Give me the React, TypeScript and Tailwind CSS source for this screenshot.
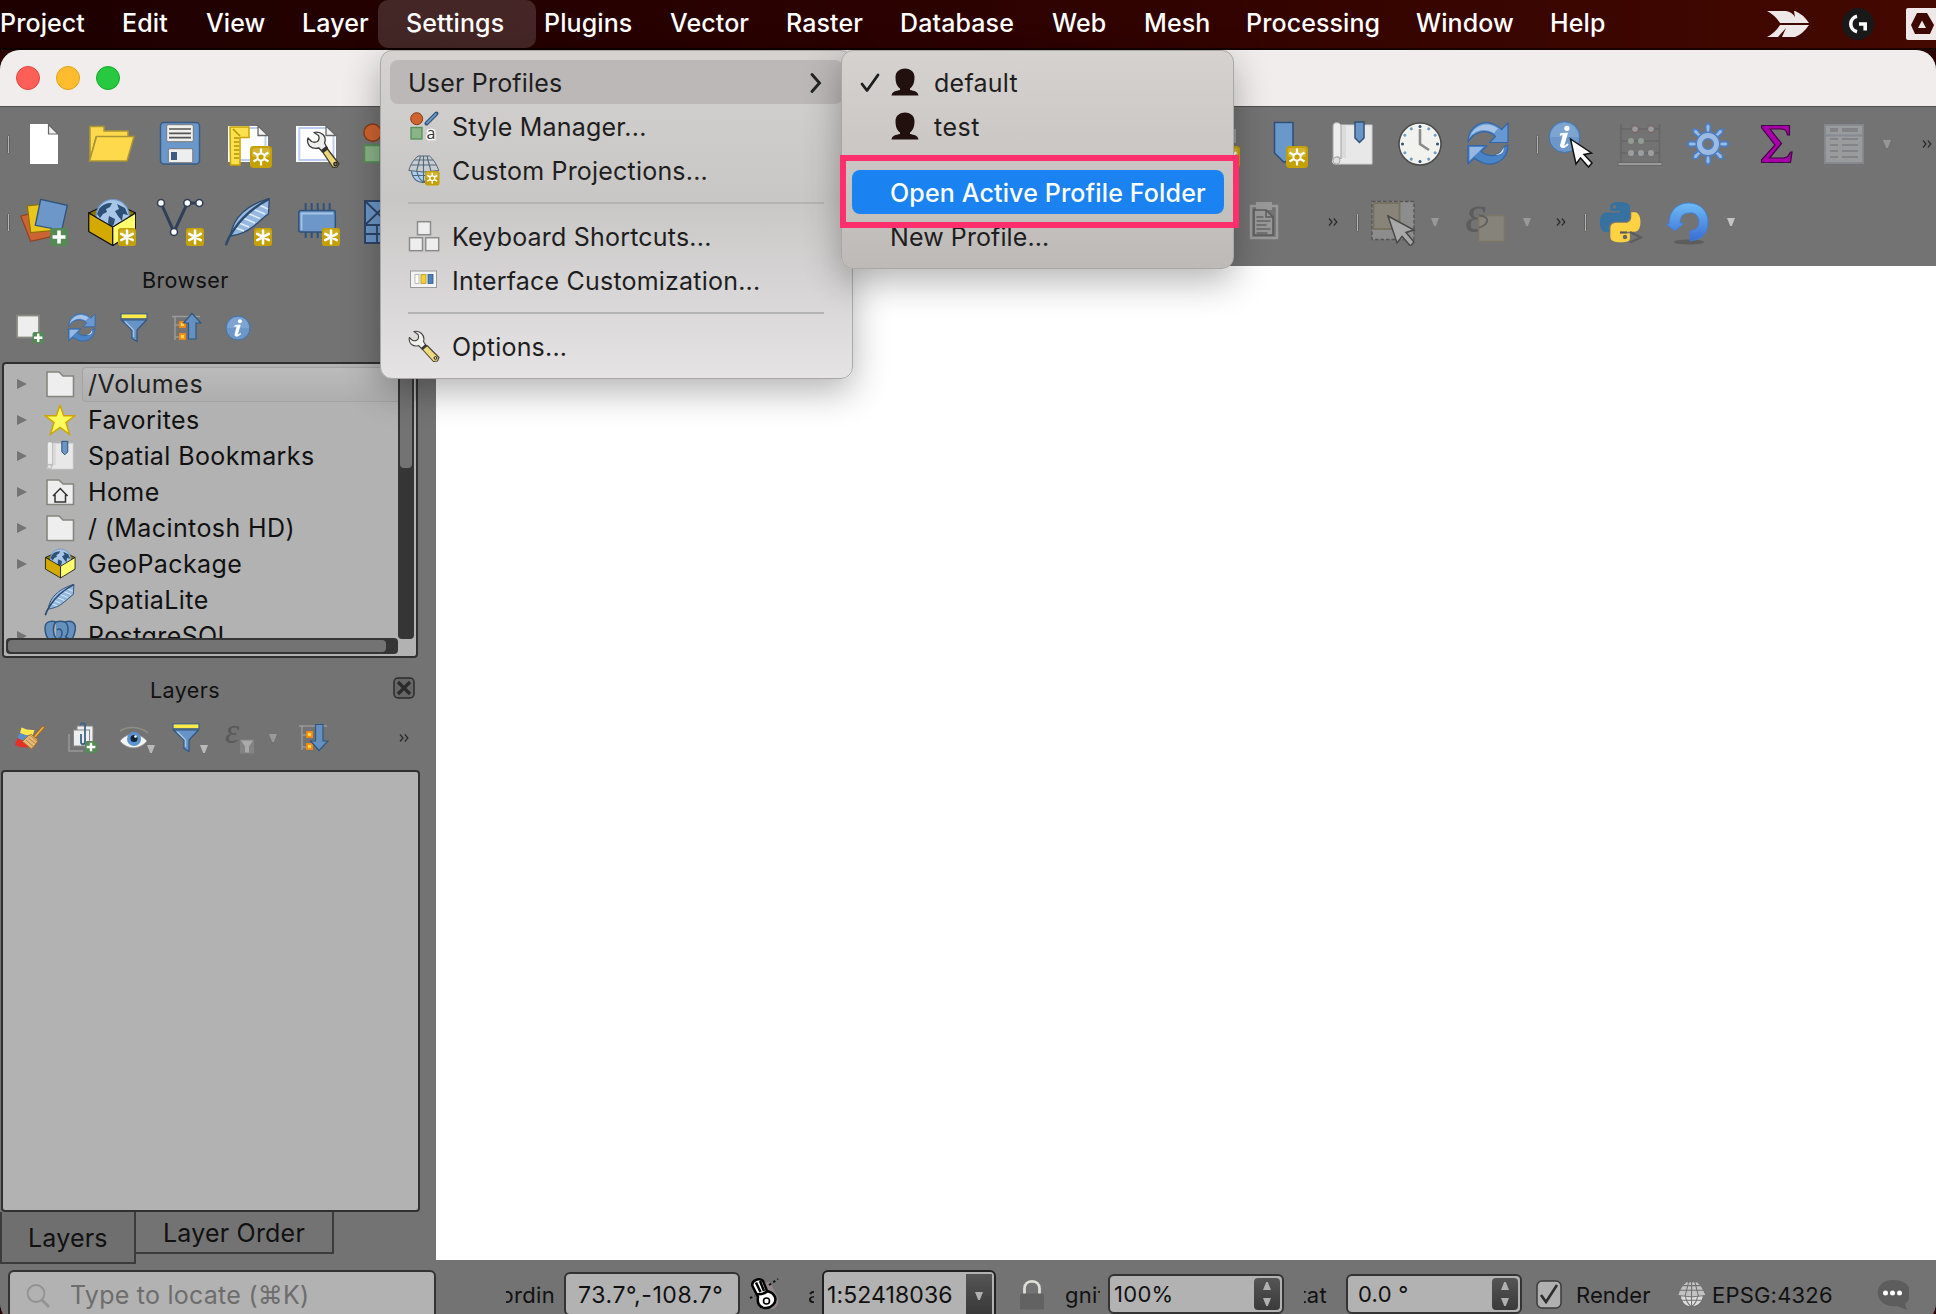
import React from "react";

type P = { children?: React.ReactNode; className?: string };

const Big = ({ children, className = "" }: P) => (
  <svg viewBox="0 0 48 48" className={"h-12 w-12 shrink-0 " + className}>{children}</svg>
);
const Small = ({ children, className = "" }: P) => (
  <svg viewBox="0 0 32 32" className={"h-8 w-8 shrink-0 " + className}>{children}</svg>
);

const Handle = ({ className = "" }: P) => (
  <div className={"h-[19px] w-[3px] shrink-0 rounded-sm border border-[#5e5e5e] bg-[#b4b4b4] " + className} />
);
const Tri = ({ className = "" }: P) => (
  <svg viewBox="0 0 10 10" className={"h-[10px] w-[10px] shrink-0 " + className}>
    <path d="M1 1h8L5.8 9H4.2z" fill="currentColor" />
  </svg>
);
const More = ({ className = "" }: P) => (
  <svg viewBox="0 0 10 8" className={"h-2 w-[10px] shrink-0 " + className}>
    <path d="M1 .5 4 4 1 7.500M5.800 .5 8.800 4 5.800 7.500" fill="none" stroke="#2c2c2c" strokeWidth="1.300" />
  </svg>
);

const Star = ({ x = 30, y = 30, s = 18 }: { x?: number; y?: number; s?: number }) => (
  <g transform={`translate(${x} ${y}) scale(${s / 18})`}>
    <rect width="18" height="18" rx="2.800" fill="#c4a000" />
    <rect x="1.500" y="1.500" width="15" height="7" rx="2" fill="#d5b83c" opacity=".6" />
    <path d="M9 2.500v13M3.200 5.800l11.600 6.400M3.200 12.200l11.600-6.400" stroke="#fff" strokeWidth="2.500" strokeLinecap="round" />
  </g>
);
const Sun = ({ x = 26, y = 26, s = 22 }: { x?: number; y?: number; s?: number }) => (
  <g transform={`translate(${x} ${y}) scale(${s / 22})`}>
    <rect width="22" height="22" rx="3.500" fill="#c4a000" />
    <rect x="2" y="2" width="18" height="9" rx="2" fill="#d8bd48" opacity=".7" />
    <path d="M11 2.500v17M3.500 6.500l15 9M3.500 15.500l15-9" stroke="#fff" strokeWidth="2.200" />
    <circle cx="11" cy="11" r="3.600" fill="#c4a000" stroke="#fff" strokeWidth="2" />
  </g>
);
const Plus = ({ x = 30, y = 30, s = 18 }: { x?: number; y?: number; s?: number }) => (
  <g transform={`translate(${x} ${y}) scale(${s / 18})`}>
    <rect width="18" height="18" rx="3" fill="#568a55" />
    <path d="M9 2.500v13M2.500 9h13" stroke="#fff" strokeWidth="3.600" />
  </g>
);

const WrenchShape = () => (
  <g strokeLinejoin="round">
    <path d="M22 12.500L26.500 15.500Q28 19 25.500 21.500Q22.500 23 19.500 21.500L16 18Q14.500 22 17.500 26Q21.500 29.500 27 28L30.500 32L35.500 28.500L32.500 23Q34.500 18 31 14.500Q27 11 22 12.500z" fill="#eeeeec" stroke="#3a3a3a" strokeWidth="1.300" />
    <path d="M31 32.500l4.500-3.500 11.500 15-2 3-4 .5z" fill="#ecd678" stroke="#3d3a2c" strokeWidth="1.300" />
    <path d="M29 30l5.500-4.300 1.800 2.600-5.300 4.200z" fill="#333" />
    <circle cx="43.500" cy="44" r="1.700" fill="#888" stroke="#222" strokeWidth="1.300" />
  </g>
);
const WrenchSmall = () => (
  <g strokeLinejoin="round">
    <path d="M6 1.500l4 3q1.500 3.500-1 5.500-2.500 1.500-5 0L1.300 7.500Q.5 12 3.500 14.500q3.500 2.500 7 1l3.500 3.500 4-3.500-2.500-4Q17 7 13.500 3.500 10 .5 6 1.500z" fill="#f1f1ef" stroke="#444" strokeWidth="1.100" />
    <path d="M14.500 19.500l4.500-4 12 12-1.500 3.500-4 .5z" fill="#eed97f" stroke="#4a4632" strokeWidth="1.100" />
    <path d="M13 18l4.500-4 1.800 1.800-4.500 4z" fill="#3a3a3a" />
    <circle cx="27.500" cy="28" r="1.400" fill="#ddd" stroke="#222" />
  </g>
);
const Page = () => (
  <>
    <path d="M4 6h30l10 9.500V42H4z" fill="#fff" />
    <path d="M34 8H7.300v32h34.200V15" fill="none" stroke="#bccdf2" strokeWidth="2" />
    <path d="M34 6v9.500h10z" fill="#f2f2f2" stroke="#666" strokeWidth="1.300" />
  </>
);
const StyleGlyph = () => (
  <>
    <circle cx="8.700" cy="8.700" r="6" fill="#cf6430" stroke="#8a3b16" />
    <path d="M18.500 13.500 28.500 3.500" stroke="#2c5379" strokeWidth="4" strokeLinecap="round" />
    <path d="M19 13 28 4" stroke="#6d97c4" strokeWidth="1.800" strokeLinecap="round" />
    <rect x="3" y="17.500" width="11" height="11.500" fill="#8ab38a" stroke="#559155" strokeWidth="1.300" />
  </>
);
const GlobeBox = ({ badge }: { badge?: boolean }) => (
  <>
    <path d="M.7 15 24.500 4l23.200 11-23.200 14z" fill="#8d7400" stroke="#111" strokeWidth="1.300" />
    <circle cx="24.700" cy="18" r="16.500" fill="#a9c5e7" stroke="#6b98c9" strokeWidth="1.200" />
    <path d="M11 11c4-5 8-6 13-6l-2 4-4 2 1 3-4 2-3 4-3-4zM21 18l6 3-1 5-4 5-2-7zM29 6l8 4 3 7-5-1-1 7-4-5-3-5 4-2z" fill="#2d5077" />
    <path d="M.7 15 24.700 29v18.500L.7 33.500z" fill="#d4aa00" stroke="#111" strokeWidth="1.300" strokeLinejoin="round" />
    <path d="M47.700 15 24.700 29v18.500l23-14z" fill="#ffff6e" stroke="#111" strokeWidth="1.300" strokeLinejoin="round" />
    {badge && <Star />}
  </>
);
const FeatherShape = () => (
  <>
    <path d="M45.300.5C30 5 17 13 10.500 25 8 30 7 34 6.500 38c6-1 15-3 22-9 7-5 11-10 16-13z" fill="#94b8e0" stroke="#2c4a6e" strokeWidth="1.300" strokeLinejoin="round" />
    <path d="M15 25l10 4M19 20l12 5M24 15.500l12 5M29 11l12 5M35 7l9 4M12 30l8 3" stroke="#e2edf8" strokeWidth="1.400" />
    <path d="M45 1C30 9 18 19 9 33 5 39 3 43 2 47.300" fill="none" stroke="#2c4a6e" strokeWidth="2.400" />
  </>
);
const RefreshShape = () => (
  <>
    <path d="M4 22C4 6 20-2.500 34 6.500q2 1.200 3.500 3L44 3v19.500H25.500l6-6C24 9 11 10 4 22z" fill="#6798d2" stroke="#3266a8" strokeWidth="1.200" strokeLinejoin="round" />
    <path d="M6 17C9 7 22-.5 34 8.500l-4 4.500C21 8 12 9.500 6 17z" fill="#bcd3ee" opacity=".75" />
    <path d="M44 25c0 16-16 24-30 15.500q-2-1-3.500-2.500L4 44V25.500h19l-6 6C25 38 37 37 39.500 27z" fill="#4a83c6" stroke="#3266a8" strokeWidth="1.200" strokeLinejoin="round" />
    <path d="M5.500 27h14l-4.500 4.500-9.500 9z" fill="#a9c6ea" opacity=".8" />
    <path d="M39.500 27c-1 4-4 7-8 8 5 0 9-2 8-8z" fill="#ddd" />
  </>
);
const BookShape = () => (
  <>
    <path d="M10 5h34v39H7c-4 0-3-6 0-7z" fill="#e8e8e8" stroke="#cfcfcf" />
    <path d="M13 6h5v32h-5z" fill="#d2d2d2" opacity=".6" />
    <path d="M5 6c0-5 8-4 8 0v33c-1-3-6-3-7 0l-1 1z" fill="#ededed" stroke="#a5a5a5" />
    <circle cx="8.500" cy="40.500" r="3.500" fill="#dedede" stroke="#aaa" />
    <path d="M27 2h9v16l-4.500 4.500L27 18z" fill="#6b95c5" stroke="#2e527a" strokeWidth="1.500" />
  </>
);
const InfoShape = ({ cx = 16, cy = 16, r = 12 }) => (
  <>
    <circle cx={cx} cy={cy} r={r} fill="#6d97c8" stroke="#4373aa" strokeWidth="1" />
    <path d={`M${cx - r * 0.9} ${cy}a${r * 0.9} ${r * 0.9} 0 0 1 ${r * 1.8} 0z`} fill="#8fb1da" opacity=".5" />
    <g transform={`translate(${cx} ${cy}) scale(${r / 16})`}>
      <circle cx="2.500" cy="-9" r="2.700" fill="#fff" />
      <path d="M-4-3.500 3-4-.5 8c-.5 2 1 1.500 3.500-1l.8.8C0 12-5 12-4 8l2.500-9c.3-1.500-1-1.500-3-.8z" fill="#fff" stroke="#fff" />
    </g>
  </>
);
const Funnel = () => (
  <>
    <path d="M3.500 8h25L19 18v11.500l-5-3V18z" fill="#6794c6" stroke="#2f5781" strokeWidth="1.200" />
    <path d="M7 9.500 15.500 18v7" fill="none" stroke="#a5c3e4" strokeWidth="1.500" />
    <rect x="3" y="1.800" width="26" height="5" fill="#fde94a" stroke="#3e6187" strokeWidth="1.200" />
  </>
);
const FolderSmall = ({ home }: { home?: boolean }) => (
  <>
    <path d="M3 4h12l4 4h10.500v20.500H3z" fill="#eeeeee" stroke="#86867f" strokeWidth="1.600" />
    {home && <path d="M9 20l7.300-7.500 7.300 7.500M11 18.500V26h10.500v-7.500" fill="none" stroke="#333" strokeWidth="1.500" />}
  </>
);
const GlobeGrid = ({ top, base, line }: { top: string; base: string; line: string }) => (
  <>
    <path d="M3.500 16h24.500c0 7-5 12.500-12.500 12.500S3.500 23 3.500 16z" fill={base} stroke={line} strokeWidth="1.200" />
    <path d="M5 21.500h21M15.500 16v12.500M9 16c0 6 2 9 6.500 12.500C20 25 22 22 22 16" fill="none" stroke={line} strokeWidth="1.100" />
    <path d="M10 2h11.500q6 5 9.300 14.500-15 3-30 0Q3.500 7 10 2z" fill={top} stroke={line} />
    <path d="M6.500 6h18.500M3 11h25.500M15.500 2v16M12.500 2 8.500 17.500M19 2l4 15.500" fill="none" stroke={line} strokeWidth="1.100" />
  </>
);
const Cursor = ({ fill = "#fff", stroke = "#111" }) => (
  <path d="M22.500 19l21 14-7.500 1.500 8 8.500-3.500 4-8-9-4.500 6z" fill={fill} stroke={stroke} strokeWidth="1.500" />
);

const menus: [string, string][] = [
  ["Project", "w-[122px]"], ["Edit", "w-[84px]"], ["View", "w-[96px]"], ["Layer", "w-[104px]"],
  ["Settings", "w-[138px]"], ["Plugins", "w-[126px]"], ["Vector", "w-[116px]"], ["Raster", "w-[114px]"],
  ["Database", "w-[152px]"], ["Web", "w-[92px]"], ["Mesh", "w-[102px]"], ["Processing", "w-[170px]"],
  ["Window", "w-[134px]"], ["Help", "w-[217px]"],
];

function MenuBar() {
  return (
    <header className="relative flex h-[50px] items-center border-b-2 border-black/60 bg-gradient-to-r from-[#1e0001] via-[#2c0200] to-[#440900]">
      <div className="absolute left-[378px] top-0 h-12 w-[158px] rounded-[10px] bg-white/15" />
      <nav className="relative flex pb-[2px] text-[25px] font-medium leading-[46px] tracking-[0.1px] text-white">
        {menus.map(([t, w]) => <span key={t} className={"shrink-0 " + w}>{t}</span>)}
      </nav>
      <svg viewBox="0 0 42 28" className="h-7 w-[42px] shrink-0">
        <path d="M0 1h19q6 1 9 6l-1-6h1q8 3 14 12H13Q8 5 0 1zM0 27q8-4 13-12h29q-6 9-14 12H15l4-9-8 9z" fill="#efe8e8" />
      </svg>
      <svg viewBox="0 0 32 32" className="ml-[33px] h-8 w-8 shrink-0">
        <circle cx="16" cy="16" r="16" fill="#191919" />
        <path d="M15 8.200a8 8 0 0 0 0 15.600M17 16h6.200v6.500" fill="none" stroke="#fff" strokeWidth="3.600" />
      </svg>
      <svg viewBox="0 0 30 32" className="ml-8 h-8 w-[30px] shrink-0">
        <rect width="34" height="32" rx="2" fill="#efe8e8" />
        <path d="M11 5h10l7 12-4 9H9l-4-9z" fill="#3d0700" />
        <path d="M16 12.500l4 7.500h-8z" fill="#efe8e8" />
      </svg>
    </header>
  );
}

function Toolbars() {
  return (
    <div className="flex h-[159px] shrink-0 flex-col bg-[#737373] pt-[13px]">
      <div className="flex h-12 items-center">
        <Handle className="ml-[7px] mr-[10px]" />
        <Big>
          <path d="M10 4h18l10 10v30H10z" fill="#fff" /><path d="M28.500 4.500v9.500H38z" fill="#eee" stroke="#666" strokeWidth="1.200" />
        </Big>
        <Big className="ml-5">
          <path d="M2 6.500h14v4.500h24v6H8L2 40z" fill="#fcd94d" stroke="#ac9633" strokeWidth="1.500" />
          <path d="M8.500 16.500H46L39 41H1.500z" fill="#fdd94b" stroke="#ac9633" strokeWidth="1.500" />
        </Big>
        <Big className="ml-5">
          <rect x="4.500" y="2.500" width="39" height="41.500" rx="3.500" fill="#6b98ca" stroke="#385c85" strokeWidth="1.500" />
          <rect x="10.700" y="4.700" width="26.600" height="17" rx="1.500" fill="#f0f0ee" stroke="#777" />
          <path d="M13 9h22M13 13.300h22M13 17.600h22" stroke="#555" strokeWidth="1.700" />
          <rect x="12.300" y="28.700" width="24.500" height="14" rx="1.500" fill="#eee" stroke="#777" />
          <rect x="15" y="32" width="6" height="8" fill="#3c5b80" />
        </Big>
        <Big className="ml-5">
          <Page />
          <path d="M6 7h19v10.500H16V45H6.500z" fill="#fce14f" stroke="#c9a300" strokeWidth="1.500" />
          <path d="M9 9l7 7M10 18h5M10 22h5M10 26h5M10 30h5M10 34h5M10 38h5" stroke="#b69300" strokeWidth="1.500" />
          <Sun />
        </Big>
        <Big className="ml-5"><Page /><WrenchShape /></Big>
        <Big className="ml-5"><g transform="scale(1.450)"><StyleGlyph /></g></Big>
        <Big className="ml-[784px]"><path d="M38 9h6v14h-6z" fill="#999" /><Sun /></Big>
        <Big className="ml-5"><path d="M14.500 2.500H33v37l-9.200 2.500-9.300-9z" fill="#6b98ca" stroke="#2e527a" strokeWidth="1.600" /><Sun /></Big>
        <Big className="ml-5"><BookShape /></Big>
        <Big className="ml-5">
          <circle cx="24" cy="24" r="21" fill="#f2f2ef" stroke="#4b4b4b" strokeWidth="1.500" />
          {[0, 1, 2, 3, 4, 5, 6, 7, 8, 9, 10, 11].map(i => (
            <circle key={i} cx="24" cy="6.500" r="1.500" fill={i % 3 ? "#6a9bd0" : "#2d5378"} transform={`rotate(${i * 30} 24 24)`} />
          ))}
          <path d="M24 9v15l9 6" fill="none" stroke="#8b8b8b" strokeWidth="2.600" />
        </Big>
        <Big className="ml-5"><RefreshShape /></Big>
        <Handle className="ml-[24px]" />
        <Big className="ml-[9px]"><InfoShape cx={16.500} cy={17} r={15.500} /><Cursor /></Big>
        <Big className="ml-[20px]">
          <g fill="none" stroke="#686868" strokeWidth="1.700"><path d="M5 4v38M43.500 4v38M5 9h38.500M5 21h38.500M5 33h38.500" /></g>
          <path d="M2 42.500h44v3H2z" fill="#9a9a9a" stroke="#686868" />
          <g fill="#999" stroke="#7a6464" strokeWidth="1.300"><circle cx="19" cy="9" r="3.500" /><circle cx="35" cy="9" r="3.500" /></g>
          <g fill="#929b92"><circle cx="15" cy="21" r="3" /><circle cx="25" cy="21" r="3" /></g>
          <g fill="#9c9fa2"><circle cx="15" cy="33" r="3" /><circle cx="25" cy="33" r="3" /><circle cx="35" cy="33" r="3" /></g>
        </Big>
        <Big className="ml-5">
          {[0, 45, 90, 135, 180, 225, 270, 315].map(a => (
            <path key={a} d="M22.400 15l-.9-9L24 3l2.500 3-.9 9z" fill="#9dbbe2" stroke="#4a7ec2" strokeWidth="1.700" transform={`rotate(${a} 24 24)`} />
          ))}
          <circle cx="24" cy="24" r="8.500" fill="none" stroke="#4a7ec2" strokeWidth="8" />
          <circle cx="24" cy="24" r="8.500" fill="none" stroke="#9dbbe2" strokeWidth="5" />
        </Big>
        <Big className="ml-5"><path d="M9.500 5.500h28V15h-2c-1-5-3-6-7-6H18l11.500 14.500L17.500 38H31c4 0 6-2 7.500-6H40l-1.500 10.500h-29V40L23 25 9.500 7.500z" fill="#a900a9" stroke="#420042" strokeWidth="1.200" /></Big>
        <Big className="ml-5">
          <rect x="5" y="5" width="38" height="38" fill="#999b9d" stroke="#858a90" strokeWidth="1.800" />
          <path d="M5 15.500h38" stroke="#858a90" strokeWidth="2" />
          <path d="M10 10h8M22 10h16" stroke="#828487" strokeWidth="4" />
          <path d="M10 19h8M22 19h16M10 25h8M22 25h16M10 31h8M22 31h16M10 37h8M22 37h16" stroke="#828487" strokeWidth="1.800" />
        </Big>
        <Tri className="ml-[14px] text-[#979797]" />
        <More className="ml-[30px]" />
      </div>
      <div className="mt-[30px] flex h-12 items-center">
        <Handle className="ml-[7px] mr-[10px]" />
        <Big>
          <path d="M.7 18l27-6 6 26-23 5.300z" fill="#cb6434" stroke="#96401c" strokeWidth="1.200" />
          <path d="M7.300 8 34 5l4 27-27.300 2.500z" fill="#eac51e" stroke="#8c7300" strokeWidth="1.200" />
          <path d="M20.700 1.300 47.300 7.300l-5.600 25L15.300 27.300z" fill="#6c97c8" stroke="#2e527a" strokeWidth="1.300" />
          <Plus />
        </Big>
        <Big className="ml-5"><GlobeBox badge /></Big>
        <Big className="ml-5">
          <path d="M5 5l13 29L31.300 5h12" fill="none" stroke="#2f4158" strokeWidth="3" />
          {[[5, 5], [18, 34], [31.300, 5], [43.300, 5]].map(([x, y]) => <circle key={x} cx={x} cy={y} r="3.500" fill="#fff" stroke="#2f4158" strokeWidth="1.600" />)}
          <Star />
        </Big>
        <Big className="ml-5"><FeatherShape /><Star /></Big>
        <Big className="ml-5">
          <path d="M13.700 5v35M19.700 5v35M25.700 5v35M31.700 5v35M37.700 5v35" stroke="#2e527a" strokeWidth="2" />
          <rect x="6.800" y="12.500" width="36.500" height="21.500" rx="2" fill="#6c97c8" stroke="#2e527a" strokeWidth="1.500" />
          <path d="M9.500 32V15.500H41" fill="none" stroke="#a6c3e5" strokeWidth="1.800" />
          <Star />
        </Big>
        <Big className="ml-5">
          <rect x="5" y="3" width="40" height="42" fill="#6c97c8" stroke="#2e4466" strokeWidth="2" />
          <path d="M5 27h40M5 36h40M17 27v18M30 3v42M5 3l25 24M30 3 5 27" stroke="#2e4466" strokeWidth="1.800" />
        </Big>
        <Big className="ml-[832px]">
          <path d="M11 8h26v32H11z" fill="none" stroke="#999" strokeWidth="2.500" /><rect x="16" y="4" width="16" height="8" fill="#999" />
          <path d="M14 12h12l7 7v18H14z" fill="#989898" stroke="#5b5b5b" strokeWidth="1.600" /><path d="M26 12v7h7" fill="none" stroke="#5b5b5b" strokeWidth="1.500" />
          <path d="M16.500 19h7M16.500 23h14M16.500 27h10M16.500 31h14M16.500 35h11" stroke="#666" strokeWidth="1.500" />
        </Big>
        <More className="ml-[40px]" />
        <Handle className="ml-[18px]" />
        <Big className="ml-[9px]">
          <rect x="4" y="3.500" width="42" height="38" fill="#8d8d8d" stroke="#555" strokeWidth="1.400" strokeDasharray="3.500 2" />
          <rect x="5.500" y="5" width="26" height="26" fill="#88847a" stroke="#77715f" strokeWidth="1.800" />
          <path d="M20 18l26 14-8 2.500 8 9.500-3.500 4-8.500-9.500-5 6.500z" fill="#a8a8a8" stroke="#484848" strokeWidth="1.500" />
        </Big>
        <Tri className="ml-[14px] text-[#999]" />
        <Big className="ml-5">
          <text x="5" y="33" fill="#5d5d5d" className="font-['Liberation_Serif'] text-[52px] italic">ε</text>
          <rect x="18.500" y="17.500" width="26" height="26" fill="#86837a" stroke="#7a7566" strokeWidth="1.500" />
          <path d="M19 17.500c6 0 9 3 8 6s-4 5-8 6" fill="none" stroke="#5f5f5f" strokeWidth="1.800" />
        </Big>
        <Tri className="ml-[14px] text-[#999]" />
        <More className="ml-[24px]" />
        <Handle className="ml-[18px]" />
        <Big className="ml-[9px]">
          <g transform="translate(4 4) scale(1.680)">
            <path fill="#36719f" d="M14.250.18l.9.2.73.26.59.3.45.32.34.34.25.34.16.33.1.3.04.26.02.2-.01.130V8.500l-.05.63-.13.55-.21.46-.26.38-.3.31-.33.25-.35.19-.35.14-.33.1-.3.07-.26.04-.21.02H8.770l-.69.05-.59.14-.5.22-.41.27-.33.32-.27.35-.2.36-.15.37-.1.35-.07.32-.04.27-.02.21v3.060H3.170l-.21-.03-.28-.07-.32-.12-.35-.18-.36-.26-.36-.36-.35-.46-.32-.59-.28-.73-.21-.88-.14-1.050-.05-1.230.06-1.220.16-1.040.24-.87.32-.71.36-.57.4-.44.42-.33.42-.24.4-.16.36-.1.32-.05.24-.01h.16l.06.010h8.160v-.83H6.180l-.01-2.750-.02-.37.05-.34.11-.31.17-.28.25-.26.31-.23.38-.2.44-.18.51-.15.58-.12.64-.1.71-.06.77-.04.84-.02 1.270.05zm-6.300 1.980l-.23.33-.08.41.08.41.23.34.33.22.41.09.41-.09.33-.22.23-.34.08-.41-.08-.41-.23-.33-.33-.22-.41-.09-.41.09z" />
            <path fill="#ffd243" d="M21.040 6.110l.28.06.32.12.35.18.36.27.36.35.35.47.32.59.28.73.21.88.14 1.040.05 1.230-.06 1.230-.16 1.040-.24.86-.32.71-.36.57-.4.45-.42.33-.42.24-.4.16-.36.09-.32.05-.24.02-.16-.01h-8.220v.82h5.840l.01 2.760.02.36-.05.34-.11.31-.17.29-.25.25-.31.24-.38.2-.44.17-.51.15-.58.13-.64.09-.71.07-.77.04-.84.01-1.270-.04-1.070-.14-.9-.2-.73-.25-.59-.3-.45-.33-.34-.34-.25-.34-.16-.33-.1-.3-.04-.25-.02-.2.01-.13v-5.340l.05-.64.13-.54.21-.46.26-.38.3-.32.33-.24.35-.2.35-.14.33-.1.3-.06.26-.04.21-.02.13-.01h5.840l.69-.05.59-.14.5-.21.41-.28.33-.32.27-.35.2-.36.15-.36.1-.35.07-.32.04-.28.02-.21V6.070h2.090l.14.010z" />
          </g>
          <circle cx="29" cy="39" r="2.200" fill="#666" />
          <path d="M24 34.500h7M34 34l11 5.500-11 5" fill="none" stroke="#5c5c5c" strokeWidth="2" />
        </Big>
        <Big className="ml-5">
          <defs><linearGradient id="undo" x1="0" y1="0" x2="0" y2="1"><stop offset="0" stopColor="#6dbcf6" /><stop offset="1" stopColor="#3a6cd4" /></linearGradient></defs>
          <ellipse cx="25" cy="44" rx="15" ry="2.500" fill="#4d4d4d" opacity=".6" />
          <path d="M2 26h3C5 12 14 5 25 5c12 0 19 9 19 19 0 13-8 18-18 19V33c6-1 9-4 9-9 0-6-4-10-10-9-6 0-9 4-9 10l4 0-9 8z" fill="url(#undo)" stroke="#3f7edb" strokeWidth=".8" />
        </Big>
        <Tri className="ml-[14px] text-[#c4c4c4]" />
      </div>
    </div>
  );
}

const treeRows: { label: string; icon: React.ReactNode; leaf?: boolean }[] = [
  { label: "/Volumes", icon: <FolderSmall /> },
  { label: "Favorites", icon: <path d="M16 1.500l3.800 10.300h11L22 18.600l3.500 11.700L16 23.500 6.500 30.300 10 18.600 1.200 11.800h11z" fill="#fffb5c" stroke="#d1a500" strokeWidth="1.500" /> },
  { label: "Spatial Bookmarks", icon: <g transform="scale(.660)"><BookShape /></g> },
  { label: "Home", icon: <FolderSmall home /> },
  { label: "/ (Macintosh HD)", icon: <FolderSmall /> },
  { label: "GeoPackage", icon: <g transform="translate(1 0) scale(.630)"><GlobeBox /></g> },
  { label: "SpatiaLite", icon: <g transform="translate(0 0) scale(.660)"><FeatherShape /></g>, leaf: true },
  { label: "PostgreSQL", icon: <path d="M1 8c0-8 8-7 11-6 3-1 6-1 9 0 6-2 12 0 10 9-1 5-3 9-5 9l-4-3-1 12h-7l-2-10-6 2C3 19 1 13 1 8zm11-6c-4 4-3 12 0 17m9-17c4 3 4 12 0 15M13 10c2-2 5-1 5 3 0 5-3 6-4 5" fill="#6690be" stroke="#30567f" strokeWidth="1.500" /> },
];

function Dock() {
  return (
    <aside className="relative z-10 flex h-[994px] w-[436px] shrink-0 flex-col bg-[#737373]">
      <div className="h-[28px] pl-[142px] text-[21.5px] leading-7 tracking-[0.4px] text-[#111]">Browser</div>
      <div className="mt-[18px] flex h-8 gap-5 pl-[14px]">
        <Small>
          <rect x="3" y="3.500" width="22" height="22" fill="#eee" stroke="#888a80" strokeWidth="1.800" /><Plus x={18.500} y={20} s={11.500} />
        </Small>
        <Small><g transform="scale(.660)"><RefreshShape /></g></Small>
        <Small><Funnel /></Small>
        <Small>
          <path d="M2 4.500h28M5 4.500V28M5 13h6M5 25h6" fill="none" stroke="#999" strokeWidth="1.500" />
          <rect x="10" y="10" width="5" height="5" fill="#ffd54a" stroke="#f58a12" strokeWidth="1.800" /><rect x="10" y="22" width="5" height="5" fill="#ffd54a" stroke="#f58a12" strokeWidth="1.800" />
          <path d="M22 1.500l9 9.500h-5v16h-7.500V11h-5z" fill="#6690bf" stroke="#2f5781" strokeWidth="1.200" />
        </Small>
        <Small><InfoShape /></Small>
      </div>
      <div className="relative ml-[2px] mt-[18px] h-[296px] w-[416px] shrink-0 overflow-hidden rounded border-2 border-[#303030] bg-[#b2b2b2] pt-[2px]">
        {treeRows.map((r, i) => (
          <div key={r.label} className="flex h-9 items-center">
            <svg viewBox="0 0 10 10" className="ml-[13px] h-[10px] w-[10px] shrink-0">{!r.leaf && <path d="M0 0l10 5-10 5z" fill="#747474" />}</svg>
            <Small className="ml-[17px]">{r.icon}</Small>
            <span className={i === 0
              ? "ml-[6px] h-[35px] flex-1 rounded border border-[#a2a2a2] bg-gradient-to-b from-[#bbb] to-[#aeaeae] pl-[5px] text-[25px] leading-[32px] tracking-[0.6px] text-[#222]"
              : "ml-3 whitespace-nowrap text-[25px] leading-9 tracking-[0.4px] text-[#111]"}>{r.label}</span>
          </div>
        ))}
        <div className="absolute right-[2px] top-0 h-[275px] w-4 rounded-b bg-[#353535] px-[2px]"><div className="h-[104px] rounded-b-sm bg-[#737373]" /></div>
        <div className="absolute bottom-[1px] left-0 h-[17px] w-[412px]">
          <div className="h-[17px] w-[394px] bg-[#b2b2b2] pl-[2px]">
            <div className="h-4 w-[392px] rounded bg-[#353535] p-[2px]"><div className="h-3 w-[378px] rounded-sm bg-[#737373]" /></div>
          </div>
        </div>
      </div>
      <div className="mt-[18px] flex h-7 items-center text-[21.5px] tracking-[0.4px] text-[#111]">
        <span className="ml-[150px] w-[243px]">Layers</span>
        <svg viewBox="0 0 22 22" className="-mt-[4px] h-[22px] w-[22px]">
          <rect x="1" y="1" width="20" height="20" rx="4" fill="#666" stroke="#2b2b2b" strokeWidth="1.500" />
          <path d="M5 5l12 12M17 5 5 17" stroke="#2b2b2b" strokeWidth="3.200" />
        </svg>
      </div>
      <div className="mt-[18px] flex h-8 items-center gap-5 pl-[14px]">
        <Small>
          <path d="M7.500 5.500q6 3 13 2.500l-2 6q-7 0-12.500-3z" fill="#ffe84d" /><path d="M6 11q6 3 12.500 3l-2 5q-7 1-13-3z" fill="#5d8fcb" /><path d="M3.500 16q6 4 12 3.500l-2 6Q6 26 1 23z" fill="#e62f28" />
          <path d="M29 5.500 21 14.500" stroke="#a96a1b" strokeWidth="3.200" strokeLinecap="round" /><path d="M29 5.500 21 14.500" stroke="#f0b045" strokeWidth="1.600" strokeLinecap="round" />
          <path d="M17.500 12.500l6.500 5.500-1.500 3.500-5 5.500-9-7.500 6-6z" fill="#e4b878" stroke="#a96a1b" strokeLinejoin="round" />
          <path d="M12 18l8 7M14.500 16l7.500 6M17 14l6.500 5.500" stroke="#b8863f" />
        </Small>
        <Small>
          <path d="M3 12v17h14" fill="none" stroke="#999" strokeWidth="1.500" /><rect x="11" y="4" width="16" height="16" fill="#eee" stroke="#858585" /><rect x="7.500" y="8" width="16" height="16" fill="#eee" stroke="#858585" />
          <path d="M15 12v8c0 3 4 3 4 0V3c0-2.500-4-2.500-4 0" fill="none" stroke="#3a628c" strokeWidth="1.800" /><Plus x={19} y={19} s={12} />
        </Small>
        <Small>
          <path d="M2 19c7-9 19-9 27 0-7 9-20 9-27 0z" fill="#f3f3f0" stroke="#999" /><path d="M2 9c7-5 20-5 28 2" fill="none" stroke="#8d8d82" strokeWidth="1.600" />
          <circle cx="16" cy="17" r="7" fill="#5b92cf" /><circle cx="16" cy="16.500" r="3.500" fill="#123" /><circle cx="17.500" cy="14.500" r="1.300" fill="#fff" />
        </Small>
        <Tri className="-ml-[24px] mt-[22px] h-[9px] w-[9px] text-[#b9b9b9]" />
        <Small className="-ml-[6px]"><Funnel /></Small>
        <Tri className="-ml-[23px] mt-[22px] h-[9px] w-[9px] text-[#b9b9b9]" />
        <Small className="-ml-[5px]">
          <text x="1" y="21" fill="#595959" className="font-['Liberation_Serif'] text-[36px] italic">ε</text>
          <path d="M16 17.500h14v14H16z" fill="#838383" /><path d="M17 18.500h12l-4 6v6h-4v-6z" fill="#aaa" />
        </Small>
        <Tri className="-ml-[8px] h-[9px] w-[9px] text-[#999]" />
        <Small className="-ml-px">
          <path d="M2 4h28M5 4v24M5 13h6M5 25h6" fill="none" stroke="#999" strokeWidth="1.500" />
          <rect x="10" y="10" width="5" height="5" fill="#ffd54a" stroke="#f58a12" strokeWidth="1.800" /><rect x="10" y="22" width="5" height="5" fill="#ffd54a" stroke="#f58a12" strokeWidth="1.800" />
          <path d="M22 28.500l9-9.500h-5V2.500h-7.500V19h-5z" fill="#6690bf" stroke="#2f5781" strokeWidth="1.200" />
        </Small>
        <More className="ml-[50px]" />
      </div>
      <div className="ml-px mt-4 h-[442px] w-[419px] shrink-0 rounded border-2 border-[#303030] bg-[#b2b2b2]" />
      <div className="flex items-start text-[25px] tracking-[0.2px] text-[#111]">
        <div className="h-[52px] w-[136px] shrink-0 border-2 border-t-0 border-[#3b3b3b] bg-[#6f6f6f] pl-[26px] leading-[53px]">Layers</div>
        <div className="h-[42px] w-[198px] shrink-0 border-2 border-l-0 border-t-0 border-[#3b3b3b] pl-[27px] leading-[43px]">Layer Order</div>
      </div>
    </aside>
  );
}

const Spin = ({ value, className, pad = "pl-[4px]" }: { value: string; className: string; pad?: string }) => (
  <div className={"mt-[14px] flex h-[40px] w-[176px] shrink-0 items-center justify-between rounded-md border-2 border-[#333] bg-[#b2b2b2] pr-[2px] " + pad + " " + className}>
    <span className="pt-px">{value}</span>
    <div className="flex h-8 w-[26px] flex-col items-center justify-center gap-[6px] rounded bg-gradient-to-b from-[#555] to-[#3a3a3a] text-[#b0b0b0]">
      <Tri className="rotate-180" /><Tri />
    </div>
  </div>
);

function StatusBar() {
  return (
    <footer className="flex h-[66px] shrink-0 items-start bg-[#737373] text-[22px] leading-[35px] tracking-[0.3px] text-[#111]">
      <div className="ml-2 mt-[10px] flex h-[60px] w-[428px] shrink-0 rounded-md border-2 border-[#333] bg-[#b2b2b2] pl-4 pt-[12px]">
        <svg viewBox="0 0 24 24" className="h-6 w-6 shrink-0"><circle cx="10" cy="9.500" r="8.500" fill="none" stroke="#929292" strokeWidth="1.800" /><path d="M16 16l7 7" stroke="#929292" strokeWidth="2.600" /></svg>
        <span className="ml-[20px] whitespace-nowrap font-['Inter','DejaVu_Sans',sans-serif] text-[25px] leading-[22px] tracking-[0.25px] text-[#6d6d6d]">Type to locate (⌘K)</span>
      </div>
      <div className="ml-[70px] mt-[18px] flex w-[49px] shrink-0 justify-end overflow-hidden">ordin</div>
      <div className="ml-[9px] mt-[12px] h-[44px] w-[176px] shrink-0 whitespace-nowrap rounded-md border-2 border-[#333] bg-[#b2b2b2] pl-[12px] text-[23px] leading-[43px] tracking-[0.6px]">73.7°,-108.7°</div>
      <svg viewBox="0 0 32 34" className="ml-[9px] mt-[17px] h-[34px] w-8 shrink-0">
        <path d="M9 7l12-2 8 16c2 7-3 12-8 11z" fill="#a08f8f" opacity=".7" />
        <path d="M3.500 9C2 4 10 0 14 4l4 10c3 1 6 1 8 6 2 6-4 11-9 11-7 0-9-5-8-11z" fill="#fff" stroke="#000" strokeWidth="2.500" />
        <path d="M7 5.500l4.500 9.500M11 4l4 10" fill="none" stroke="#000" strokeWidth="2.500" /><path d="M7.500 17q7 1 11-3" fill="none" stroke="#000" strokeWidth="2.500" />
        <circle cx="17.500" cy="24" r="3" fill="#fff" stroke="#000" strokeWidth="1.600" />
        <path d="M20 8l9-6M1 21l5-2" stroke="#111" strokeWidth="2" strokeDasharray="2.500 2.500" />
      </svg>
      <div className="ml-[28px] mt-[18px] flex w-[5px] shrink-0 overflow-hidden"><span className="-ml-[1px]">a</span></div>
      <div className="ml-[8px] mt-[10px] flex h-[50px] w-[174px] shrink-0 justify-between rounded-md border-2 border-[#222] bg-[#b2b2b2] pl-[3px] pr-[2px] pt-[2px]">
        <span className="text-[23px] leading-[43px] tracking-[0.1px]">1:52418036</span>
        <div className="flex h-[44px] w-[26px] items-center justify-center bg-gradient-to-b from-[#555] to-[#363636] text-[#b0b0b0]"><Tri /></div>
      </div>
      <svg viewBox="0 0 26 32" className="ml-[23px] mt-[19px] h-8 w-[26px] shrink-0">
        <path d="M5.500 15V9.500C5.500 0 20.500 0 20.500 9.500V15" fill="none" stroke="#deded8" strokeWidth="2.800" /><rect x="1" y="14.500" width="24" height="16" rx="1.500" fill="#626262" />
      </svg>
      <div className="ml-[20px] mt-[18px] w-[35px] shrink-0 overflow-hidden whitespace-nowrap">gnif</div>
      <Spin value="100%" className="ml-[8px]" />
      <div className="ml-[20px] mt-[18px] flex w-[23px] shrink-0 justify-end overflow-hidden">tat</div>
      <Spin value="0.0 °" className="ml-[19px]" pad="pl-[10px]" />
      <svg viewBox="0 0 26 32" className="ml-[14px] mt-[19px] h-8 w-[26px] shrink-0">
        <rect x="1" y="2" width="24" height="27" rx="5" fill="#b0b0b0" stroke="#3b3b3b" strokeWidth="1.500" /><path d="M5 16l5 7L21 6" fill="none" stroke="#2d2d2d" strokeWidth="2.600" />
      </svg>
      <span className="ml-[14px] mt-[18px] w-[101px] shrink-0 tracking-[0.05px]">Render</span>
      <svg viewBox="0 0 32 32" className="mt-[19px] h-8 w-[30px] shrink-0"><GlobeGrid top="#c2c2c2" base="#dedede" line="#707070" /></svg>
      <span className="ml-[5px] mt-[18px] w-[165px] shrink-0 tracking-[0.2px]">EPSG:4326</span>
      <svg viewBox="0 0 32 32" className="mt-[19px] h-8 w-8 shrink-0">
        <path d="M16 1c21 0 20 18 12 24l2 6-10-4C-4 30-6 1 16 1z" fill="#5d5d5d" /><g fill="#fff"><circle cx="8.500" cy="14" r="2.500" /><circle cx="15.500" cy="14" r="2.500" /><circle cx="22.500" cy="14" r="2.500" /></g>
      </svg>
    </footer>
  );
}

const Item = ({ icon, children }: { icon: React.ReactNode; children: React.ReactNode }) => (
  <div className="flex h-11 items-center pl-[27px]"><Small>{icon}</Small><span className="ml-3 pt-[4px]">{children}</span></div>
);
const Sep = () => <div className="my-[10px] ml-[27px] mr-[28px] h-[2px] bg-[#b5b4b4]" />;

function SettingsMenu() {
  return (
    <div className="absolute left-[380px] top-[50px] z-20 h-[329px] w-[473px] rounded-xl border border-[#a9a7a7] bg-gradient-to-b from-[#d5d2d0] via-[#c8c7c6] via-45% to-[#e6e3e4] pt-[9px] text-[25px] tracking-[0.2px] text-[#1e1e1e] shadow-[0_12px_36px_rgba(0,0,0,0.3)]">
      <div className="ml-[9px] flex h-11 w-[453px] items-center justify-between rounded-lg bg-[#bbb8b7] pl-[18px] pr-[21px]">
        <span className="pt-[4px]">User Profiles</span>
        <svg viewBox="0 0 12 20" className="mt-[2px] h-5 w-3"><path d="M2 1.500 9.500 10 2 18.500" fill="none" stroke="#222" strokeWidth="2.800" strokeLinecap="round" /></svg>
      </div>
      <Item icon={<><StyleGlyph /><text x="18.500" y="29" className="font-['Open_Sans'] text-[16px]" fill="#333" stroke="#fff" strokeWidth="2.500" paintOrder="stroke">a</text></>}>Style Manager...</Item>
      <Item icon={<><GlobeGrid top="#c7ccd0" base="#a9d0f4" line="#55677a" /><Sun x={17} y={17} s={14.500} /></>}>Custom Projections...</Item>
      <Sep />
      <Item icon={<g fill="#eee" stroke="#8c8c8c" strokeWidth="1.500"><rect x="9.500" y="1.700" width="13" height="13" /><rect x="1.500" y="17.700" width="13" height="13" /><rect x="17.700" y="17.700" width="13" height="13" /></g>}>Keyboard Shortcuts...</Item>
      <Item icon={<><rect x="2.500" y="7" width="26" height="16.500" fill="#f3f3f3" stroke="#999" /><rect x="7" y="10.500" width="4" height="9" fill="#fff" stroke="#aaa" strokeWidth=".8" /><rect x="13" y="10.500" width="5" height="9" fill="#f5cf35" stroke="#b89a20" strokeWidth=".8" /><rect x="20" y="10.500" width="5" height="9" fill="#4b7fbd" stroke="#305a8c" strokeWidth=".8" /></>}>Interface Customization...</Item>
      <Sep />
      <Item icon={<WrenchSmall />}>Options...</Item>
    </div>
  );
}

const Head = () => (
  <svg viewBox="0 0 28 28" className="h-7 w-7 shrink-0">
    <path d="M4.500 9C4.500-2.500 23.500-2.500 23.500 9c0 5-1 9-4.500 11.500v1.500c4 .8 8 1.500 8.500 5.500H.5C1 23.500 5 22.800 9 22v-1.500C5.500 18 4.500 14 4.500 9z" fill="#22100f" />
  </svg>
);

function ProfilesMenu() {
  return (
    <>
      <div className="absolute left-[841px] top-[50px] z-30 h-[219px] w-[393px] rounded-xl border border-[#a9a7a7] bg-gradient-to-b from-[#d6d2cf] to-[#bebab8] pt-[9px] text-[25px] tracking-[0.1px] text-[#1e1e1e] shadow-[0_12px_36px_rgba(0,0,0,0.3)]">
        <div className="flex h-11 items-center pl-[18px]">
          <svg viewBox="0 0 20 20" className="mt-[2px] h-5 w-5"><path d="M2 11l5 6.500L18 2" fill="none" stroke="#1e1e1e" strokeWidth="2.800" strokeLinecap="round" strokeLinejoin="round" /></svg>
          <span className="ml-[11px]"><Head /></span><span className="ml-[15px] pt-[4px] tracking-[0.25px]">default</span>
        </div>
        <div className="flex h-11 items-center pl-[49px]"><Head /><span className="ml-[15px] pt-[4px] tracking-[0.5px]">test</span></div>
        <div className="ml-[10px] mt-[22px] h-11 w-[372px] whitespace-nowrap rounded-lg bg-[#1a82f1] pl-[38px] font-medium leading-[46px] tracking-[0.15px] text-white">Open Active Profile Folder</div>
        <div className="h-11 pl-[48px] leading-[46px]">New Profile...</div>
      </div>
      <div className="absolute left-[840px] top-[155px] z-40 h-[73px] w-[399px] border-[6px] border-[#ff2e6c]" />
    </>
  );
}

export default function App() {
  return (
    <div className="relative h-[1314px] w-[1936px] overflow-hidden bg-[#2a0302] font-['Inter',sans-serif]">
      <MenuBar />
      <div className="flex flex-col overflow-hidden rounded-b-3xl rounded-t-[20px] bg-[#737373]">
        <div className="flex h-[57px] shrink-0 items-center gap-4 border-b border-[#4f4f4f] bg-[#f1eded] pl-4">
          <div className="h-6 w-6 rounded-full border border-[#e2463f] bg-[#ff5f57]" />
          <div className="h-6 w-6 rounded-full border border-[#e1a116] bg-[#febc2e]" />
          <div className="h-6 w-6 rounded-full border border-[#12ac28] bg-[#28c840]" />
        </div>
        <Toolbars />
        <div className="flex h-[994px] shrink-0"><Dock /><main className="flex-1 bg-white" /></div>
        <StatusBar />
      </div>
      <SettingsMenu />
      <ProfilesMenu />
    </div>
  );
}
